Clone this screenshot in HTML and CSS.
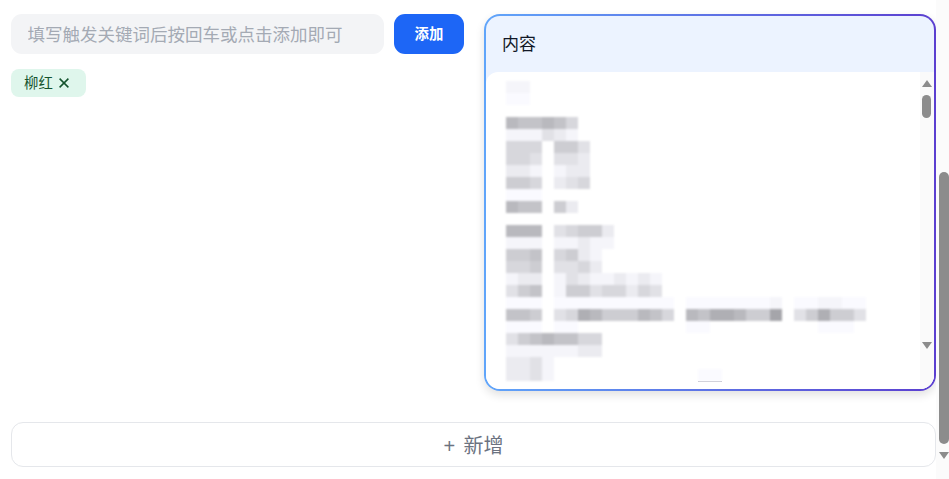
FILE: index.html
```html
<!DOCTYPE html>
<html lang="zh-CN">
<head>
<meta charset="utf-8">
<title>关键词</title>
<link rel="stylesheet" href="styles.css">
</head>
<body>
<div class="page">
  <div class="top">
    <section class="left">
      <div class="entry">
        <input class="field" type="text" placeholder="填写触发关键词后按回车或点击添加即可">
        <button class="add" type="button">添加</button>
      </div>
      <div class="tags">
        <span class="tag"><span class="tag-text">柳红</span>
          <svg class="tag-x" viewBox="0 0 10 10" aria-hidden="true"><path d="M.6.6l8.8 8.8M9.4.6L.6 9.4"/></svg>
        </span>
      </div>
    </section>
    <section class="card">
      <h2 class="card-head">内容</h2>
      <div class="card-body">
        <div class="mosaic" id="mosaic"></div>
        <div class="mosaic-line"></div>
        <div class="mini-bar">
          <span class="arrow up"></span>
          <span class="mini-thumb"></span>
          <span class="arrow down mini-down"></span>
        </div>
      </div>
    </section>
  </div>
  <button class="new" type="button">+ 新增</button>
</div>
<div class="page-bar">
  <span class="page-thumb"></span>
  <span class="arrow down page-down"></span>
</div>
<script src="mosaic.js"></script>
</body>
</html>
```
FILE: styles.css
```css
* { box-sizing: border-box; }
html, body { margin: 0; height: 479px; overflow: hidden; background: #fff; }
body { font-family: "Liberation Sans", "Noto Sans CJK SC", sans-serif; color: #111827; }
.page { width: 925px; margin-left: 11px; padding-top: 14px; display: flex; flex-direction: column; gap: 31px; }
.top { display: flex; gap: 20px; }
.left { width: 453px; display: flex; flex-direction: column; gap: 15px; }
.entry { display: flex; gap: 10px; }
.field { width: 373px; height: 40px; border: 0; border-radius: 11px; background: #f3f4f6; padding: 0 16px 2px 16.5px; font: 17.5px "Noto Sans CJK SC", sans-serif; outline: 0; }
.field::placeholder { color: #a4aab4; opacity: 1; }
.add { width: 70px; height: 40px; border: 0; border-radius: 11px; background: #1d66f6; color: #fff; font: 700 14.4px "Noto Sans CJK SC", sans-serif; padding: 0 0 4px; }
.tags { display: flex; }
.tag { width: 75px; height: 28px; border-radius: 8px; background: #dff6ec; color: #14532d; display: flex; align-items: center; gap: 6px; padding-left: 13px; font: 14.4px "Noto Sans CJK SC", sans-serif; }
.tag-text { margin-bottom: 4px; }
.tag-x { width: 10px; height: 10px; fill: none; stroke: #14532d; stroke-width: 1.5; }
.card { width: 452px; height: 377px; border: 2px solid transparent; border-radius: 16px; background: linear-gradient(#ecf3ff, #ecf3ff) padding-box, linear-gradient(to right, #60a5fa, #5b3fd0) border-box; box-shadow: 0 4px 10px rgba(0, 0, 0, .12); display: flex; flex-direction: column; overflow: hidden; }
.card-head { height: 56px; margin: 0; padding: 0 16px 4px; display: flex; align-items: center; font: 400 17px "Noto Sans CJK SC", sans-serif; color: #111827; }
.card-body { position: relative; flex: 1; background: #fff; border-radius: 12px 0 0 0; padding: 9px 0 0 20px; overflow: hidden; }
.mosaic { display: grid; grid-template-columns: repeat(30, 12px); grid-auto-rows: 12px; filter: blur(.8px); }
.mosaic-line { width: 24px; height: 1px; margin: 0 0 0 192px; background: #bfbfca; }
.mini-bar { position: absolute; top: 0; right: 0; bottom: 0; width: 14px; background: #fafafa; }
.mini-thumb { position: absolute; top: 23px; left: 2px; width: 9px; height: 23px; border-radius: 5px; background: #8c8c8c; }
.arrow { position: absolute; width: 0; height: 0; border-left: 5px solid transparent; border-right: 5px solid transparent; }
.arrow.up { top: 8px; left: 1.5px; border-bottom: 7px solid #8c8c8c; }
.arrow.down { border-top: 7px solid #8c8c8c; }
.mini-down { top: 270px; left: 1.5px; }
.new { height: 45px; border: 1px solid #e5e7eb; border-radius: 12px; background: #fff; color: #6b7280; font: 400 20px "Liberation Sans", "Noto Sans CJK SC", sans-serif; word-spacing: 3px; padding: 0; }
.page-bar { position: absolute; top: 0; right: 0; width: 13px; height: 479px; background: #fbfbfb; }
.page-thumb { position: absolute; top: 172px; left: 3px; width: 10px; height: 272px; border-radius: 5px; background: #8c8c8c; }
.page-down { top: 452px; left: 3px; }
```
FILE: mosaic.js
```js
var rows = [
  "11",
  "aa",
  "",
  "766764",
  "111321",
  "4440553",
  "4430332",
  "2210122",
  "5540234",
  "aaa0",
  "766052",
  "",
  "777034552",
  "111011211",
  "55604521",
  "44503342",
  "1220132112121",
  "3560155344243",
  "aaa0aaaaaaaaaa0aaaaaaa10aa11aa",
  "665034875557640768875590358553",
  "aaa0aa00000000" + "0aa00000000" + "0aaa",
  "35676644",
  "11111122",
  "2231",
  "2231000000000000aa"
];
var host = document.getElementById("mosaic");
rows.forEach(function (row) {
  for (var i = 0; i < 30; i++) {
    var cell = document.createElement("span");
    var ch = row.charAt(i) || "0";
    var level = ch === "a" ? 0.5 : parseInt(ch, 10);
    var g = Math.round(255 - level * 10);
    if (level) cell.style.background = "rgb(" + g + "," + g + "," + Math.min(255, g + 5) + ")";
    host.appendChild(cell);
  }
});
```
